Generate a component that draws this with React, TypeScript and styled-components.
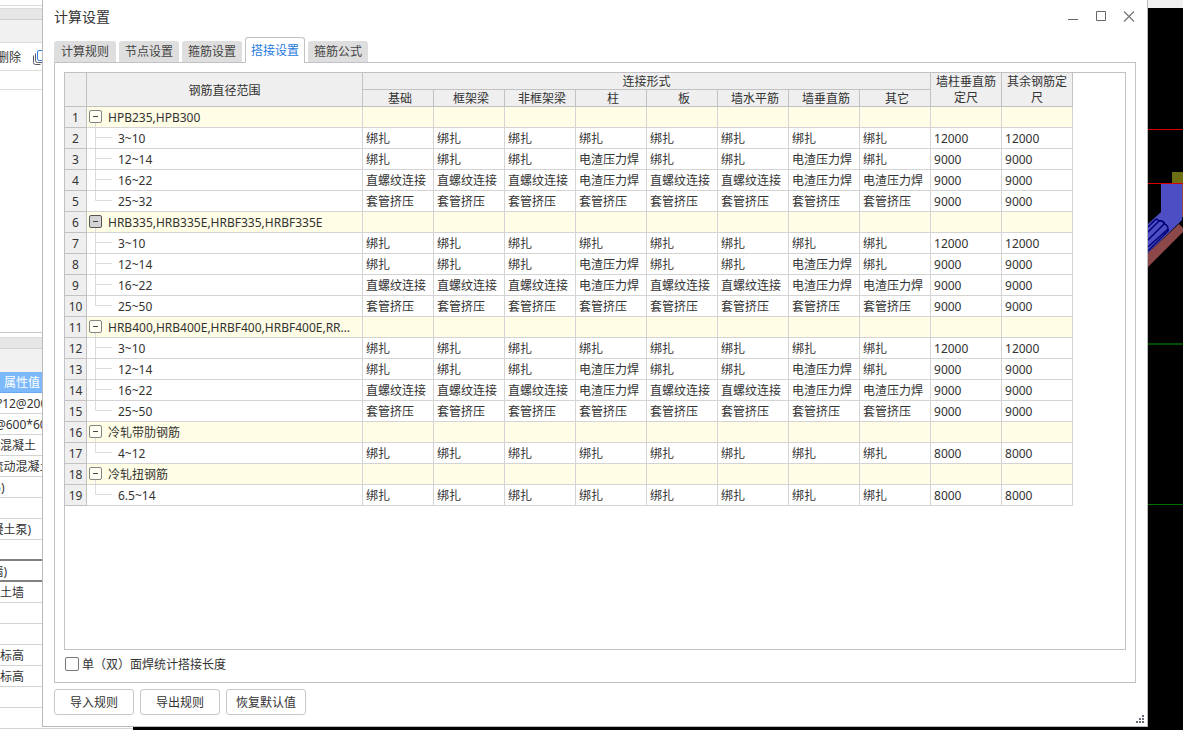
import React from 'react';
import styled, { createGlobalStyle, css } from 'styled-components';

const GlobalStyle = createGlobalStyle`
  * { box-sizing: border-box; }
  body {
    margin: 0;
    background: #fff;
    color: #333;
    font: 12px/16px "Noto Sans", "Noto Sans CJK SC", sans-serif;
  }
  button, input { font: inherit; color: inherit; }
`;

const Screen = styled.div`
  position: relative;
  display: flex;
  min-height: 100vh;
  overflow: hidden;
`;

/* ---------- application behind the dialog ---------- */

const Backdrop = styled.div`
  position: absolute;
  inset: 0;
  display: flex;
  overflow: hidden;
`;

const SidePanel = styled.aside`
  flex: none;
  width: 133px;
  background: #fff;
  white-space: nowrap;
  overflow: hidden;
`;

const Strip = styled.div<{ $h: number; $bg?: string; $line?: string }>`
  display: flex;
  align-items: center;
  height: ${(p) => p.$h}px;
  background: ${(p) => p.$bg ?? '#fff'};
  border-bottom: 1px solid ${(p) => p.$line ?? '#dcdcdc'};
`;

const DeleteTool = styled.button`
  display: flex;
  align-items: center;
  gap: 12px;
  margin: 0 0 0 -3px;
  padding: 2px 0 0;
  border: 0;
  background: none;
`;

const PropHeader = styled.div`
  height: 21px;
  padding-left: 4px;
  line-height: 21px;
  color: #fff;
  background: #7cb9fb;
  border-bottom: 1px solid #6aa9ee;
`;

const PropRow = styled.div<{ $marked?: boolean }>`
  height: 21px;
  margin-left: -24px;
  line-height: 22px;
  border-bottom: 1px solid #d4d4d4;
  ${(p) =>
    p.$marked &&
    css`
      border-bottom: 2px solid #808080;
    `}
`;

const Viewport = styled.div`
  flex: 1;
  display: flex;
  flex-direction: column;
  align-items: flex-end;
  background: #000;
`;

const ViewportBar = styled.div`
  align-self: stretch;
  flex: none;
  height: 8px;
  background: #f0f0f0;
`;

const ModelDrawing = styled.svg`
  flex: none;
  display: block;
`;

/* ---------- dialog ---------- */

const Dialog = styled.section`
  position: relative;
  flex: 1;
  min-width: 0;
  display: flex;
  flex-direction: column;
  margin: 0 35px 3px 42px;
  padding: 0 11px 11px;
  background: #fff;
  border: 1px solid #b9babe;
  border-top: 0;
`;

const TitleBar = styled.header`
  display: flex;
  justify-content: space-between;
  align-items: center;
  height: 34px;
`;

const Title = styled.h1`
  margin: 0;
  font-size: 14px;
  line-height: 20px;
  font-weight: 400;
`;

const WindowButtons = styled.div`
  display: flex;
  gap: 12px;
`;

const WindowButton = styled.button`
  display: flex;
  padding: 0;
  border: 0;
  background: none;
`;

const Tabs = styled.div`
  position: relative;
  z-index: 1;
  display: flex;
  align-items: flex-end;
  gap: 3px;
  margin: 3px 0 -1px;
`;

const Tab = styled.button<{ $active?: boolean }>`
  height: 22px;
  padding: 0 6px;
  border: 0;
  border-radius: 3px 3px 0 0;
  line-height: 20px;
  color: #444;
  background: #dedede;
  border-bottom: 1px solid #c2c2c6;
  &:first-child {
    padding: 0 7px;
  }
  ${(p) =>
    p.$active &&
    css`
      height: 26px;
      padding: 0 5px;
      color: #1f7ae0;
      background: #fff;
      border: 1px solid #c2c2c6;
      border-bottom: 0;
    `}
`;

const TabPanel = styled.div`
  flex: 1;
  display: flex;
  flex-direction: column;
  padding: 9px 9px 10px;
  border: 1px solid #c2c2c6;
`;

const GridBox = styled.div`
  flex: 1;
  border: 1px solid #c2c2c6;
`;

const Table = styled.table`
  width: 1008px;
  table-layout: fixed;
  border-collapse: separate;
  border-spacing: 0;
`;

const Col = styled.col<{ $w: number }>`
  width: ${(p) => p.$w}px;
`;

const HeadRow = styled.tr`
  height: 17px;
`;

const HeadCell = styled.th<{ $indent?: boolean }>`
  height: 17px;
  padding: 2px 0 0 ${(p) => (p.$indent ? 4 : 0)}px;
  font-weight: 400;
  line-height: 14px;
  background: #efefef;
  border-right: 1px solid #c2c2c2;
  border-bottom: 1px solid #c2c2c2;
`;

const TallHead = styled(HeadCell)`
  padding-top: 1px;
  line-height: 16px;
`;

const BodyRow = styled.tr<{ $group?: boolean }>`
  height: 21px;
  background: ${(p) => (p.$group ? '#fffde5' : '#fff')};
`;

const Cell = styled.td`
  height: 21px;
  padding: 2px 0 0 3px;
  line-height: 18px;
  white-space: nowrap;
  border-right: 1px solid #d4d4d4;
  border-bottom: 1px solid #d4d4d4;
`;

const RowNumber = styled.th`
  padding: 2px 0 0;
  font-weight: 400;
  line-height: 18px;
  background: #efefef;
  border-right: 1px solid #c2c2c2;
  border-bottom: 1px solid #c2c2c2;
`;

const NameCell = styled(Cell)`
  padding: 0;
`;

const NameLine = styled.div`
  display: flex;
  align-items: center;
  height: 20px;
`;

const Toggle = styled.button<{ $hot?: boolean }>`
  position: relative;
  flex: none;
  display: flex;
  align-items: center;
  justify-content: center;
  width: 13px;
  height: 13px;
  margin: 0 6px 1px 2px;
  padding: 0;
  border: 1px solid ${(p) => (p.$hot ? '#555' : '#858585')};
  border-radius: 2px;
  background: ${(p) => (p.$hot ? '#d4d4d6' : '#fffff4')};
  &::after {
    content: '';
    position: absolute;
    top: 12px;
    left: 5px;
    width: 1px;
    height: 4px;
    background: #dcdcdc;
  }
`;

const Name = styled.span`
  padding: 2px 8px 0 0;
  line-height: 18px;
  overflow: hidden;
  text-overflow: ellipsis;
`;

const Branch = styled.svg`
  flex: none;
  display: block;
  width: 31px;
  height: 20px;
`;

const CheckLine = styled.label`
  display: flex;
  align-items: center;
  gap: 3px;
  height: 16px;
  margin-top: 6px;
`;

const CheckText = styled.span`
  padding-top: 2px;
`;

const CheckBox = styled.input`
  appearance: none;
  width: 14px;
  height: 14px;
  margin: 0 0 0 1px;
  border: 1px solid #777;
  border-radius: 2px;
  background: #fff;
`;

const Footer = styled.footer`
  display: flex;
  gap: 6px;
  margin-top: 6px;
`;

const FooterButton = styled.button`
  width: 80px;
  height: 26px;
  padding: 2px 0 0;
  border: 1px solid #c8c8c8;
  border-radius: 3px;
  background: #fff;
`;

const Grip = styled.svg`
  position: absolute;
  right: 3px;
  bottom: 3px;
`;

const properties: { text: string; marked?: boolean }[] = [
  { text: '(25)?12@200' },
  { text: '?10@600*600' },
  { text: '现浇混凝土' },
  { text: '(自流动混凝土' },
  { text: '(C25)' },
  { text: '' },
  { text: '(混凝土泵)' },
  { text: '', marked: true },
  { text: '(外墙)', marked: true },
  { text: '混凝土墙' },
  { text: '' },
  { text: '' },
  { text: '层底标高' },
  { text: '层顶标高' },
  { text: '' },
  { text: '' },
];

const forms = ['基础', '框架梁', '非框架梁', '柱', '板', '墙水平筋', '墙垂直筋', '其它'];

const TIE = '绑扎';
const WELD = '电渣压力焊';
const THREAD = '直螺纹连接';
const SLEEVE = '套管挤压';

const allTied = forms.map(() => TIE);
const small = [TIE, TIE, TIE, WELD, TIE, TIE, WELD, TIE];
const medium = [THREAD, THREAD, THREAD, WELD, THREAD, THREAD, WELD, WELD];
const large = forms.map(() => SLEEVE);

type Range = { name: string; values: string[]; length: string };

const fourRanges = (last: string): Range[] => [
  { name: '3~10', values: allTied, length: '12000' },
  { name: '12~14', values: small, length: '9000' },
  { name: '16~22', values: medium, length: '9000' },
  { name: last, values: large, length: '9000' },
];

const groups: { name: string; hot?: boolean; ranges: Range[] }[] = [
  { name: 'HPB235,HPB300', ranges: fourRanges('25~32') },
  { name: 'HRB335,HRB335E,HRBF335,HRBF335E', hot: true, ranges: fourRanges('25~50') },
  { name: 'HRB400,HRB400E,HRBF400,HRBF400E,RRB400', ranges: fourRanges('25~50') },
  { name: '冷轧带肋钢筋', ranges: [{ name: '4~12', values: allTied, length: '8000' }] },
  { name: '冷轧扭钢筋', ranges: [{ name: '6.5~14', values: allTied, length: '8000' }] },
];

function CopyIcon() {
  return (
    <svg width="16" height="16" viewBox="0 0 16 16" fill="none">
      <path d="M.5 5.500v7q0 2 2 2h5M2.500 3.500v7q0 2 2 2h5" stroke="#555a66" />
      <rect x="4.500" y=".5" width="10" height="10" rx="1.500" fill="#fff" stroke="#2f7fe6" />
    </svg>
  );
}

function Model() {
  return (
    <ModelDrawing width="35" height="722" viewBox="0 8 35 722">
      <path d="M24 172h11v11H24z" fill="#6e6e14" />
      <path d="M13 184h21v36l-4 4L0 253v-29l13-12z" fill="#4e4ec4" />
      <path d="M34.500 184v33" stroke="#8c4848" />
      <path d="M31 224l4 4v4L0 267v-14z" fill="#8c4848" />
      <path
        d="M0 227l7-7q2-2 4 1L0 232M11 221q4-1 5 3L0 240M16 224q4 1 4 5L0 247M20 229q1 2-2 4L0 251M11 221q4-1 6 3"
        fill="none"
        stroke="#000078"
        strokeWidth="1.500"
      />
      <rect y="129" width="35" height="1" fill="#d80000" />
      <rect y="183" width="35" height="1" fill="#d80000" />
      <rect y="343" width="35" height="2" fill="#004c00" />
      <rect y="504" width="35" height="1" fill="#007000" />
    </ModelDrawing>
  );
}

function DataRows() {
  let n = 0;
  return (
    <tbody>
      {groups.map((group) => (
        <React.Fragment key={group.name}>
          <BodyRow $group>
            <RowNumber scope="row">{++n}</RowNumber>
            <NameCell>
              <NameLine>
                <Toggle $hot={group.hot} aria-label="折叠">
                  <svg width="5" height="1" viewBox="0 0 5 1">
                    <path d="M0 .5h5" stroke="#444" />
                  </svg>
                </Toggle>
                <Name>{group.name}</Name>
              </NameLine>
            </NameCell>
            {Array.from({ length: 10 }, (_, i) => (
              <Cell key={i} />
            ))}
          </BodyRow>
          {group.ranges.map((range, i) => (
            <BodyRow key={range.name}>
              <RowNumber scope="row">{++n}</RowNumber>
              <NameCell>
                <NameLine>
                  <Branch viewBox="0 0 31 20">
                    <path
                      d={i === group.ranges.length - 1 ? 'M8.500 0v9.500H25' : 'M8.500 0v20M8.500 9.500H25'}
                      fill="none"
                      stroke="#dcdcdc"
                    />
                  </Branch>
                  <Name>{range.name}</Name>
                </NameLine>
              </NameCell>
              {range.values.map((value, k) => (
                <Cell key={k}>{value}</Cell>
              ))}
              <Cell>{range.length}</Cell>
              <Cell>{range.length}</Cell>
            </BodyRow>
          ))}
        </React.Fragment>
      ))}
    </tbody>
  );
}

export default function App() {
  return (
    <Screen>
      <GlobalStyle />
      <Backdrop>
        <SidePanel>
          <Strip $h={6} />
          <Strip $h={3} />
          <Strip $h={11} $bg="#e6e6e6" $line="#d0d0d0" />
          <Strip $h={23} $bg="#f1f1f1" />
          <Strip $h={28}>
            <DeleteTool>
              删除
              <CopyIcon />
            </DeleteTool>
          </Strip>
          <Strip $h={19} />
          <Strip $h={243} $line="#c8c8c8" />
          <Strip $h={5} />
          <Strip $h={11} $bg="#e6e6e6" $line="#d0d0d0" />
          <Strip $h={23} $bg="#f1f1f1" $line="#f1f1f1" />
          <PropHeader>属性值</PropHeader>
          {properties.map((row, i) => (
            <PropRow key={i} $marked={row.marked}>
              {row.text}
            </PropRow>
          ))}
        </SidePanel>
        <Viewport>
          <ViewportBar />
          <Model />
        </Viewport>
      </Backdrop>

      <Dialog role="dialog" aria-labelledby="dialog-title">
        <TitleBar>
          <Title id="dialog-title">计算设置</Title>
          <WindowButtons>
            <WindowButton aria-label="最小化">
              <svg width="16" height="16" viewBox="0 0 16 16">
                <path d="M4 10.500h10" stroke="#666" />
              </svg>
            </WindowButton>
            <WindowButton aria-label="最大化">
              <svg width="16" height="16" viewBox="0 0 16 16">
                <path d="M4.500 2.500h9v9h-9z" fill="none" stroke="#666" />
              </svg>
            </WindowButton>
            <WindowButton aria-label="关闭">
              <svg width="16" height="16" viewBox="0 0 16 16">
                <path d="M4 2.500l10 10M14 2.500l-10 10" stroke="#777" strokeWidth="1.200" />
              </svg>
            </WindowButton>
          </WindowButtons>
        </TitleBar>

        <Tabs role="tablist">
          {['计算规则', '节点设置', '箍筋设置', '搭接设置', '箍筋公式'].map((name) => (
            <Tab key={name} role="tab" aria-selected={name === '搭接设置'} $active={name === '搭接设置'}>
              {name}
            </Tab>
          ))}
        </Tabs>

        <TabPanel role="tabpanel">
          <GridBox>
            <Table>
              <colgroup>
                <Col $w={22} />
                <Col $w={276} />
                {Array.from({ length: 10 }, (_, i) => (
                  <Col key={i} $w={71} />
                ))}
              </colgroup>
              <thead>
                <HeadRow>
                  <HeadCell rowSpan={2} />
                  <HeadCell rowSpan={2}>钢筋直径范围</HeadCell>
                  <HeadCell colSpan={8}>连接形式</HeadCell>
                  <TallHead rowSpan={2}>墙柱垂直筋定尺</TallHead>
                  <TallHead rowSpan={2}>其余钢筋定尺</TallHead>
                </HeadRow>
                <HeadRow>
                  {forms.map((name) => (
                    <HeadCell key={name} $indent>
                      {name}
                    </HeadCell>
                  ))}
                </HeadRow>
              </thead>
              <DataRows />
            </Table>
          </GridBox>
          <CheckLine>
            <CheckBox type="checkbox" />
            <CheckText>单（双）面焊统计搭接长度</CheckText>
          </CheckLine>
        </TabPanel>

        <Footer>
          <FooterButton>导入规则</FooterButton>
          <FooterButton>导出规则</FooterButton>
          <FooterButton>恢复默认值</FooterButton>
        </Footer>

        <Grip width="8" height="8" viewBox="0 0 8 8" fill="#666a72">
          <path d="M6 0h2v2H6zM3 3h2v2H3zM6 3h2v2H6zM0 6h2v2H0zM3 6h2v2H3zM6 6h2v2H6z" />
        </Grip>
      </Dialog>
    </Screen>
  );
}
